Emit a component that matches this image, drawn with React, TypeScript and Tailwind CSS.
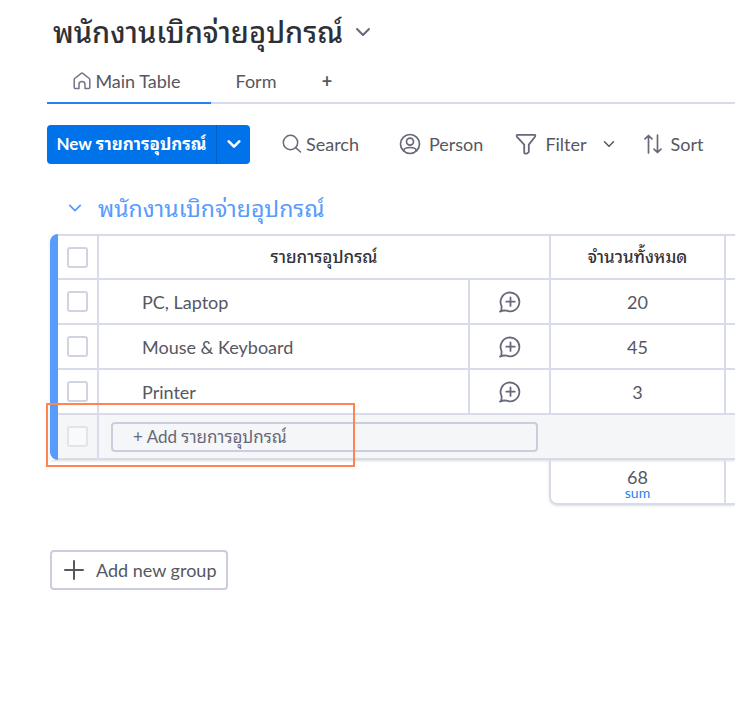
import React, { useState } from 'react';

const items = [
    { id: 'laptop', name: 'PC, Laptop', amount: 20 },
    { id: 'keyboard', name: 'Mouse & Keyboard', amount: 45 },
    { id: 'printer', name: 'Printer', amount: 3 },
];

const Chevron = ({ className }: { className: string }) => (
    <svg viewBox="0 0 16 16" className={className} fill="none" stroke="currentColor" strokeLinecap="round" strokeLinejoin="round" aria-hidden="true">
        <path d="M2 5l6 6 6-6" />
    </svg>
);

const HomeIcon = () => (
    <svg viewBox="0 0 18 18" className="size-[18px] text-[#72758a]" fill="none" stroke="currentColor" strokeWidth="1.5" strokeLinejoin="round" aria-hidden="true">
        <path d="M1.2 7.5Q1.2 6.9 1.7 6.5L8.2 1.4Q9 .8 9.8 1.4L16.3 6.5Q16.8 6.9 16.8 7.5V15.5Q16.8 16.5 15.8 16.5H12V12.5a3 3 0 0 0-6 0V16.5H2.2Q1.2 16.5 1.2 15.5z" />
    </svg>
);

const SearchIcon = () => (
    <svg viewBox="0 0 20 20" className="size-5 text-[#676879]" fill="none" stroke="currentColor" strokeWidth="1.5" strokeLinecap="round" aria-hidden="true">
        <circle cx="8.5" cy="8.5" r="7.2" />
        <path d="M13.6 13.6 18.5 18" />
    </svg>
);

const PersonIcon = () => (
    <svg viewBox="0 0 22 22" className="size-[22px] text-[#676879]" fill="none" stroke="currentColor" strokeWidth="1.7" aria-hidden="true">
        <circle cx="11" cy="11" r="9.5" />
        <circle cx="11" cy="8.6" r="3.5" />
        <path d="M5 18.3v-1c0-1.7 2-2.8 6-2.8s6 1.100 6 2.800v1" />
    </svg>
);

const FilterIcon = () => (
    <svg viewBox="0 0 22 22" className="size-[22px] text-[#676879]" fill="none" stroke="currentColor" strokeWidth="1.8" strokeLinejoin="round" aria-hidden="true">
        <path d="M2 1.8h18q.8.8 0 2l-6.2 7.8v7.4l-2 1.6h-1.6q-1 0-1-1V11.6L2 3.8q-.8-1.2 0-2z" />
    </svg>
);

const SortIcon = () => (
    <svg viewBox="0 0 20 20" className="size-5 text-[#676879]" fill="none" stroke="currentColor" strokeWidth="1.7" strokeLinecap="round" strokeLinejoin="round" aria-hidden="true">
        <path d="M5.5 19V1.5M2 4.800l3.500-3.300L9 4.800M14.500 1v17.500M11 15.200l3.500 3.300 3.500-3.300" />
    </svg>
);

const ChatIcon = () => (
    <svg viewBox="0 0 22 22" className="size-[22px]" fill="none" stroke="currentColor" strokeWidth="1.8" strokeLinecap="round" strokeLinejoin="round" aria-hidden="true">
        <path d="M1 20.600l1.400-1.200.200-4.200a9.400 9.400 0 1 1 5 4.500l-2.600-.3z" />
        <path d="M11.500 6.500v8.400M7.300 10.700h8.400" />
    </svg>
);

const PlusIcon = () => (
    <svg viewBox="0 0 20 20" className="size-5" fill="none" stroke="currentColor" strokeWidth="2" strokeLinecap="round" aria-hidden="true">
        <path d="M10 1v18M1 10h18" />
    </svg>
);

const checkboxClass = 'mx-auto block size-[21px] appearance-none rounded-[3px] border-2 border-[#d0d3e2] bg-white checked:bg-[#0073ea] disabled:opacity-50';
const cellClass = 'border-r-2 border-b-2 border-[#d8dbea] p-0';
const lastCellClass = 'border-b-2 border-[#d8dbea] p-0';

export default function App() {
    const [tab, setTab] = useState('main');
    const total = items.reduce((sum, item) => sum + item.amount, 0);

    return (
        <div className="min-h-screen overflow-x-hidden bg-white pl-[47px] font-[Lato,'Noto_Sans_Thai_Looped',Loma,Waree,Garuda,'Noto_Sans_Thai','Noto_Sans',sans-serif] text-lg leading-6 text-[#56575f]">
            {/* Board title */}
            <header className="flex items-center gap-3 pt-3 pl-1.5">
                <h1 className="text-[29px] leading-10 font-medium text-[#2f3037]">พนักงานเบิกจ่ายอุปกรณ์</h1>
                <button type="button" aria-label="Board menu" className="text-[#676879]">
                    <Chevron className="size-4 stroke-2" />
                </button>
            </header>

            {/* Views */}
            <nav className="mt-2 flex h-11 border-b-2 border-[#d8dbea]">
                <button
                    type="button"
                    onClick={() => setTab('main')}
                    className={`-mb-0.5 flex w-[164px] items-center justify-center gap-1 border-b-2 pr-1 ${tab === 'main' ? 'border-[#2383ee]' : 'border-transparent'}`}
                >
                    <HomeIcon />
                    Main Table
                </button>
                <button
                    type="button"
                    onClick={() => setTab('form')}
                    className={`-mb-0.5 w-[90px] border-b-2 ${tab === 'form' ? 'border-[#2383ee]' : 'border-transparent'}`}
                >
                    Form
                </button>
                <button type="button" aria-label="Add view" className="w-[52px] font-bold">+</button>
            </nav>

            {/* Toolbar */}
            <div className="mt-5 flex h-10 items-center whitespace-nowrap">
                <div className="flex h-[39px] w-[203px] shrink-0 overflow-hidden rounded-[4px] bg-[#0073ea] text-white">
                    <button type="button" className="flex-1 text-[17px] font-bold">New รายการอุปกรณ์</button>
                    <button type="button" aria-label="More item types" className="flex w-[34px] items-center justify-center border-l border-[#0060c2]">
                        <Chevron className="size-3.5 stroke-3" />
                    </button>
                </div>
                <button type="button" className="ml-8 flex items-center gap-1"><SearchIcon />Search</button>
                <button type="button" className="ml-10 flex items-center gap-2"><PersonIcon />Person</button>
                <button type="button" className="ml-8 flex items-center gap-2"><FilterIcon />Filter</button>
                <button type="button" aria-label="Filter options" className="ml-4"><Chevron className="size-3 stroke-2" /></button>
                <button type="button" className="ml-7 flex items-center gap-2"><SortIcon />Sort</button>
            </div>

            {/* Group */}
            <section className="pl-[3px]">
                <div className="mt-6 flex h-10 items-center gap-4 pl-[18px] text-[#579bfc]">
                    <button type="button" aria-label="Collapse group"><Chevron className="size-3.5 stroke-2" /></button>
                    <h2 className="text-[23px] leading-8">พนักงานเบิกจ่ายอุปกรณ์</h2>
                </div>

                <div className="mt-1.5 flex shadow-sm">
                    <div className="w-2 shrink-0 rounded-l-lg bg-[#579bfc]" />
                    <table className="w-full min-w-[677px] table-fixed border-separate border-spacing-0 border-t-2 border-[#d8dbea] text-center">
                        <colgroup>
                            <col className="w-[41px]" />
                            <col className="w-[371px]" />
                            <col className="w-[81px]" />
                            <col className="w-[175px]" />
                            <col />
                        </colgroup>
                        <thead>
                            <tr className="h-11 text-[17px] text-[#323338]">
                                <th className={cellClass}><input type="checkbox" aria-label="Select all" className={checkboxClass} /></th>
                                <th colSpan={2} className={`${cellClass} font-medium`}>รายการอุปกรณ์</th>
                                <th className={`${cellClass} font-medium`}>จำนวนทั้งหมด</th>
                                <th className={lastCellClass} />
                            </tr>
                        </thead>
                        <tbody>
                            {items.map((item) => (
                                <tr key={item.id} className="h-[45px]">
                                    <td className={cellClass}><input type="checkbox" aria-label={`Select ${item.name}`} className={checkboxClass} /></td>
                                    <td className={`${cellClass} text-left`}><span className="pl-[43px]">{item.name}</span></td>
                                    <td className={cellClass}>
                                        <button type="button" aria-label="Start conversation" className="mx-auto block text-[#676879]"><ChatIcon /></button>
                                    </td>
                                    <td className={cellClass}>{item.amount}</td>
                                    <td className={lastCellClass} />
                                </tr>
                            ))}
                            <tr className="h-[45px] bg-[#f5f6f8]">
                                <td className={`${cellClass} relative`}>
                                    <input type="checkbox" disabled aria-label="Select new item" className={checkboxClass} />
                                    <span className="pointer-events-none absolute -top-3 -left-3 h-16 w-[309px] border-2 border-[#ff8450]" />
                                </td>
                                <td colSpan={4} className={`${lastCellClass} pl-3`}>
                                    <input
                                        type="text"
                                        aria-label="Add item"
                                        placeholder="+ Add รายการอุปกรณ์"
                                        className="block h-[30px] w-[427px] rounded-[4px] border-2 border-[#cbcddd] bg-transparent pl-5 text-[17px] outline-none placeholder:text-[#676879]"
                                    />
                                </td>
                            </tr>
                        </tbody>
                    </table>
                </div>

                {/* Column summary */}
                <div className="ml-[499px] flex h-[45px] rounded-bl-lg border-b-2 border-l-2 border-[#d8dbea] text-center shadow-sm">
                    <div className="w-[175px] shrink-0 border-r-2 border-[#d8dbea] pt-2">
                        <div className="leading-[18px]">{total}</div>
                        <div className="text-sm leading-[14px] text-[#2383ee]">sum</div>
                    </div>
                </div>

                <button type="button" className="mt-[45px] flex h-10 items-center gap-3 rounded-[4px] border-2 border-[#cbcddf] pr-2.5 pl-3">
                    <PlusIcon />
                    Add new group
                </button>
            </section>
        </div>
    );
}
